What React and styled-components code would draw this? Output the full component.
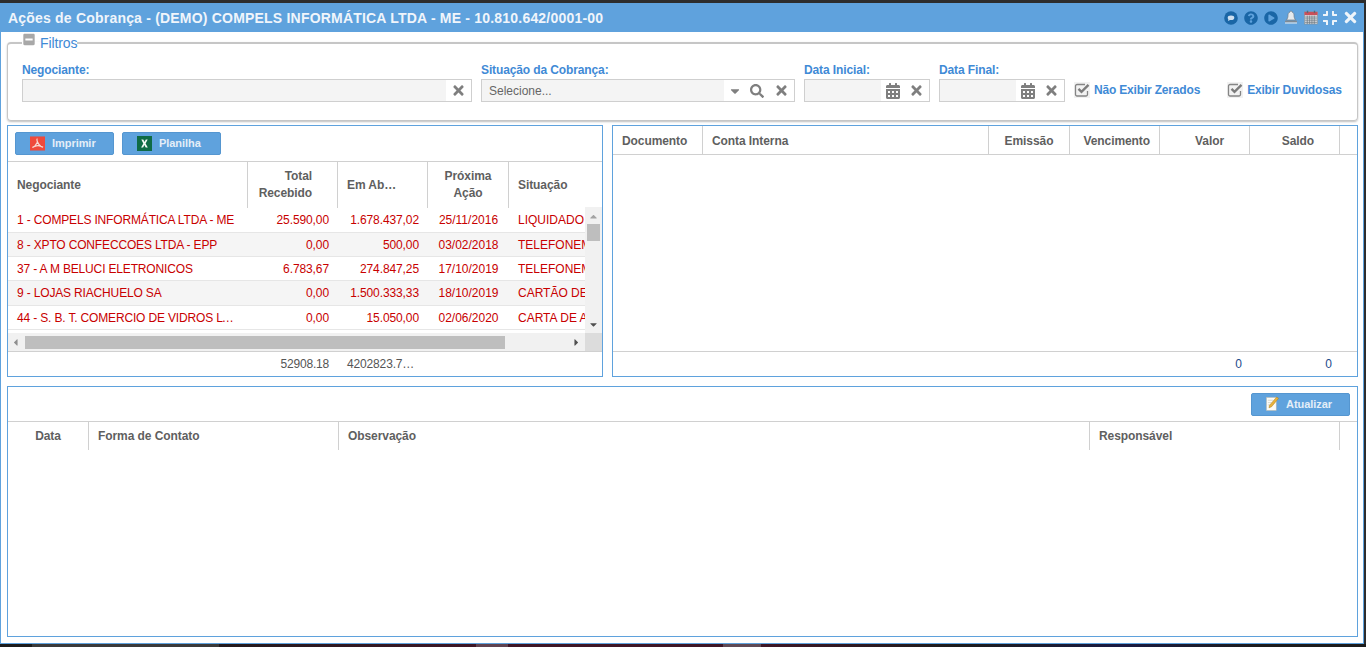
import React from 'react'
import styled, { createGlobalStyle } from 'styled-components'
import { FaTimes, FaSearch, FaCalendarAlt, FaCaretDown, FaCaretUp, FaCaretLeft, FaCaretRight, FaMinusSquare, FaQuestionCircle, FaPlayCircle, FaCompress } from 'react-icons/fa'

const GlobalStyle = createGlobalStyle`
  html, body { margin: 0; padding: 0; height: 100%; background: #222; }
  * { box-sizing: border-box; }
  body { font-family: "Liberation Sans", Arial, sans-serif; font-size: 12px; overflow: hidden; }
`

const BLUE = '#5fa2dd'

const Page = styled.div`
  width: 1366px;
  height: 647px;
  display: flex;
  flex-direction: column;
  background: #2d2d2d;
`
const Desk = styled.div`
  flex: 1;
  display: flex;
  padding-top: 3px;
  min-height: 0;
`
const Taskbar = styled.div`
  height: 3px;
  flex: none;
  background: linear-gradient(90deg,
    #1c1c1c 0 32px, #3a3a3a 32px 219px, #221a1d 219px, #3e1626 476px,
    #5f4350 476px 508px, #3e1626 508px 723px, #5f4a55 723px 761px,
    #3e1626 761px, #1c1c1c 960px, #1a1a42 1120px, #1c1c1c 1260px);
`
const Win = styled.div`
  width: 1364px;
  height: 641px;
  display: flex;
  flex-direction: column;
  background: #fff;
  border: 1px solid ${BLUE};
  border-top: 0;
`
const TitleBar = styled.div`
  height: 29px;
  flex: none;
  display: flex;
  align-items: center;
  justify-content: space-between;
  background: ${BLUE};
  padding: 0 4px 0 7px;
  color: #f0f5fb;
`
const Title = styled.div`
  font-size: 14px;
  font-weight: bold;
  letter-spacing: 0.2px;
  white-space: nowrap;
`
const Tools = styled.div`
  display: flex;
  align-items: center;
  gap: 6px;
  svg { display: block; flex: none; }
`
const CompressIcon = styled(FaCompress)`
  margin-left: -2px;
`
const CloseIcon = styled(FaTimes)`
  margin-left: -2px;
`
const Content = styled.div`
  flex: 1;
  display: flex;
  flex-direction: column;
  padding: 3px 5px 6px 6px;
  gap: 9px;
  min-height: 0;
`
const Fieldset = styled.fieldset`
  margin: 0 0 -5px;
  padding: 0 14px;
  height: 86px;
  flex: none;
  border: 1px solid #c6c6c6;
  border-top-width: 2px;
  border-radius: 4px;
  box-shadow: 0 1px 2px rgba(0, 0, 0, 0.25);
`
const Legend = styled.legend`
  display: flex;
  align-items: center;
  gap: 5px;
  padding: 0 0 0 1px;
  font-size: 14px;
  letter-spacing: -0.1px;
  color: #3f8ad6;
  line-height: 16px;
  svg { color: #a8a8a8; width: 12px; height: 13px; margin-top: -8px; }
`
const FilterRow = styled.div`
  display: flex;
  gap: 9px;
  margin-top: 12px;
  align-items: flex-end;
`
const Field = styled.div`
  width: ${p => p.$w}px;
  flex: none;
`
const Label = styled.div`
  color: #3f8ad6;
  font-weight: bold;
  font-size: 12px;
  letter-spacing: -0.12px;
  line-height: 14px;
  margin-bottom: 2px;
`
const InputBox = styled.div`
  height: 23px;
  display: flex;
  border: 1px solid #cfcfcf;
  background: #fff;
`
const InputText = styled.div`
  flex: 1;
  background: #f4f4f4;
  color: #666;
  font-size: 12px;
  line-height: 22px;
  padding-left: 7px;
`
const Trigger = styled.div`
  width: ${p => p.$w || 25}px;
  flex: none;
  display: flex;
  align-items: center;
  justify-content: center;
  color: #7f7f7f;
  svg { display: block; }
`
const Check = styled.label`
  display: flex;
  align-items: center;
  gap: 4px;
  color: #3f8ad6;
  font-weight: bold;
  font-size: 12px;
  letter-spacing: -0.18px;
  height: 23px;
  flex: none;
  margin-left: ${p => p.$ml || 0}px;
  margin-bottom: 1px;
  svg { display: block; }
`
const PanelRow = styled.div`
  display: flex;
  gap: 9px;
  height: 252px;
  flex: none;
`
const Panel = styled.div`
  border: 1px solid ${BLUE};
  display: flex;
  flex-direction: column;
  width: ${p => (p.$w ? p.$w + 'px' : 'auto')};
  flex: ${p => (p.$w ? 'none' : '1')};
  min-height: 0;
  min-width: 0;
`
const Toolbar = styled.div`
  height: ${p => p.$h}px;
  flex: none;
  display: flex;
  align-items: center;
  justify-content: ${p => (p.$end ? 'flex-end' : 'flex-start')};
  gap: 8px;
  padding: 0 7px;
  border-bottom: 1px solid #d0d0d0;
`
const Button = styled.div`
  width: 99px;
  height: 23px;
  display: flex;
  align-items: center;
  gap: 7px;
  padding: 0 0 1px 14px;
  background: ${BLUE};
  border: 1px solid #5596d0;
  border-radius: 2px;
  color: #e4eef8;
  font-size: 11px;
  font-weight: bold;
  letter-spacing: -0.05px;
  svg { display: block; flex: none; }
`
const HeadRow = styled.div`
  display: grid;
  grid-template-columns: ${p => p.$cols};
  height: ${p => p.$h}px;
  flex: none;
  border-bottom: ${p => (p.$line ? '1px solid #d0d0d0' : '0')};
`
const HeadCell = styled.div`
  display: flex;
  align-items: center;
  justify-content: ${p => p.$align || 'flex-start'};
  text-align: ${p => (p.$align === 'flex-end' ? 'right' : p.$align === 'center' ? 'center' : 'left')};
  padding: ${p => p.$pt || 0}px ${p => p.$pr || 9}px 0 9px;
  color: #5f5f5f;
  font-weight: bold;
  font-size: 12px;
  letter-spacing: -0.08px;
  line-height: 17px;
  border-right: ${p => (p.$last ? '0' : '1px solid #d0d0d0')};
  white-space: nowrap;
  overflow: hidden;
`
const GridBody = styled.div`
  flex: 1;
  display: flex;
  min-height: 0;
`
const Rows = styled.div`
  flex: 1;
  min-width: 0;
  overflow: hidden;
`
const Row = styled.div`
  display: grid;
  grid-template-columns: ${p => p.$cols};
  height: ${p => p.$h}px;
  background: ${p => (p.$odd ? '#f5f5f5' : '#fff')};
  border-bottom: 1px solid #e6e6e6;
`
const Cell = styled.div`
  padding: 1px 9px 0;
  line-height: 22px;
  color: #c80000;
  font-size: 12px;
  letter-spacing: ${p => p.$ls || 0}px;
  white-space: nowrap;
  overflow: hidden;
  text-align: ${p => p.$align || 'left'};
  text-overflow: ${p => (p.$ellipsis ? 'ellipsis' : 'clip')};
`
const VBar = styled.div`
  width: 17px;
  flex: none;
  margin-top: -1px;
  background: #f1f1f1;
  display: flex;
  flex-direction: column;
  align-items: center;
  color: #a3a3a3;
  padding-top: 4px;
  svg { display: block; flex: none; }
`
const VThumb = styled.div`
  width: 13px;
  height: 17px;
  margin-top: 2px;
  background: #bebebe;
`
const VDown = styled.div`
  margin-top: auto;
  margin-bottom: 3px;
  color: #505050;
`
const HBar = styled.div`
  height: 19px;
  flex: none;
  display: flex;
  background: #f1f1f1;
  border-bottom: 1px solid #d0d0d0;
`
const HTrack = styled.div`
  flex: 1;
  display: flex;
  align-items: flex-start;
  padding: 3px 0 0 2px;
  color: #8f8f8f;
  svg { display: block; flex: none; margin-top: 1px; }
`
const HThumb = styled.div`
  width: 480px;
  height: 13px;
  margin-left: 4px;
  background: #bebebe;
`
const HRight = styled.div`
  margin-left: auto;
  margin-right: 3px;
  color: #505050;
`
const Corner = styled.div`
  width: 17px;
  flex: none;
  background: #dcdcdc;
`
const FootRow = styled.div`
  display: grid;
  grid-template-columns: ${p => p.$cols};
  height: ${p => (p.$push ? 25 : 24)}px;
  flex: none;
  margin-top: ${p => (p.$push ? 'auto' : '0')};
  border-top: ${p => (p.$push ? '1px solid #d0d0d0' : '0')};
`
const FootCell = styled.div`
  padding: 0 ${p => p.$pr || 8}px 0 9px;
  line-height: 24px;
  font-size: 12px;
  letter-spacing: ${p => p.$ls || 0}px;
  color: ${p => p.$color || '#555'};
  text-align: ${p => p.$align || 'right'};
  white-space: nowrap;
  overflow: hidden;
`

const SpeechIcon = () => (
  <svg width="14" height="14" viewBox="0 0 14 14">
    <circle cx="7" cy="7" r="6.800" fill="#1a66a6" />
    <ellipse cx="7" cy="6.800" rx="3.300" ry="2.300" fill="#cfe0f0" />
    <path d="M4.500 8l-.5 2 2.500-1.300z" fill="#cfe0f0" />
  </svg>
)

const BellIcon = () => (
  <svg width="14" height="15" viewBox="0 0 14 15">
    <path d="M7 1c.6 0 1 .4 1 1 1.600.5 2 1.800 2 3.500 0 2 .6 3 1.500 4.500h-9C3.400 8.500 4 7.500 4 5.500 4 3.800 4.400 2.500 6 2c0-.6.400-1 1-1z" fill="#e6eaed" stroke="#6f7b86" strokeWidth="0.7" />
    <rect x="1" y="10.500" width="12" height="2" rx="0.5" fill="#7f8a94" />
    <rect x="1" y="12.500" width="12" height="1" fill="#e9edf1" />
  </svg>
)

const CalendarIcon = () => (
  <svg width="14" height="15" viewBox="0 0 15 15">
    <rect x="0.500" y="1.500" width="14" height="13" fill="#dfe3e6" stroke="#7e8890" strokeWidth="0.6" />
    <rect x="0.500" y="1.500" width="14" height="3.500" fill="#c9505a" />
    <rect x="3" y="0.200" width="1.500" height="2.500" fill="#5a6a76" />
    <rect x="10.500" y="0.200" width="1.500" height="2.500" fill="#5a6a76" />
    <path d="M1 7h13M1 9h13M1 11h13M1 13h13M3.500 5.500v9M6 5.500v9M8.500 5.500v9M11 5.500v9" stroke="#6e7a84" strokeWidth="0.8" />
  </svg>
)

const CheckIcon = () => (
  <svg width="16" height="16" viewBox="0 0 16 16">
    <rect width="16" height="16" fill="#f2f2f2" />
    <path d="M13.500 9v3.500a1.500 1.500 0 0 1-1.500 1.500H3a1.500 1.500 0 0 1-1.500-1.500V4A1.500 1.500 0 0 1 3 2.500h8" fill="none" stroke="#858585" strokeWidth="1.300" />
    <path d="M4.500 6.800l3 3L14.500 2.800" fill="none" stroke="#7c7c7c" strokeWidth="2.400" />
  </svg>
)

const PdfIcon = () => (
  <svg width="15" height="15" viewBox="0 0 16 15">
    <rect width="16" height="15" fill="#ef4a3c" />
    <path d="M8 2.500c-.8 0-.7 1.500 0 3.500L5 10.500c-1 .6-2 1-2.500 1.300M8 6c.8 1.800 2 3.300 3.500 4.500 1 .4 2 .7 2.500.8M5 10.500c2-.8 4.500-1.100 6.500 0" fill="none" stroke="#f7d9d3" strokeWidth="1.300" />
  </svg>
)

const ExcelIcon = () => (
  <svg width="15" height="15" viewBox="0 0 15 15">
    <rect width="15" height="15" fill="#0f6b45" />
    <path d="M4.300 3.500h2l1.200 2.400 1.300-2.400h1.900L8.600 7.400l2.200 4.100H8.700L7.400 9l-1.300 2.500H4.100l2.200-4.100z" fill="#f2f7f4" />
  </svg>
)

const NoteIcon = () => (
  <svg width="13" height="15" viewBox="0 0 14 16">
    <rect x="0.500" y="1.500" width="10.500" height="14" fill="#fbfbf6" stroke="#b9b9b0" strokeWidth="0.6" />
    <path d="M2 4.500h6M2 7h4M2 9.500h3" stroke="#c8c8c0" strokeWidth="0.7" />
    <path d="M11.500 1l2 1.500-7.500 9-2.800 1.200.6-2.800z" fill="#e8b23a" stroke="#a67818" strokeWidth="0.5" />
  </svg>
)

const leftCols = '240px 90px 90px 81px 1fr'
const rightCols = '90px 286px 81px 90px 90px 90px 1fr'
const bottomCols = '81px 250px 751px 250px 1fr'
const rowHeights = [25, 24, 24, 25, 24]

const negociantes = [
  ['1 - COMPELS INFORMÁTICA LTDA - ME', '25.590,00', '1.678.437,02', '25/11/2016', 'LIQUIDADO'],
  ['8 - XPTO CONFECCOES LTDA - EPP', '0,00', '500,00', '03/02/2018', 'TELEFONEMA'],
  ['37 - A M BELUCI ELETRONICOS', '6.783,67', '274.847,25', '17/10/2019', 'TELEFONEMA'],
  ['9 - LOJAS RIACHUELO SA', '0,00', '1.500.333,33', '18/10/2019', 'CARTÃO DE CRÉDITO'],
  ['44 - S. B. T. COMERCIO DE VIDROS LTDA', '0,00', '15.050,00', '02/06/2020', 'CARTA DE AVISO'],
]

export default function App() {
  return (
    <Page>
      <GlobalStyle />
      <Desk>
        <Win>
          <TitleBar>
            <Title>Ações de Cobrança - (DEMO) COMPELS INFORMÁTICA LTDA - ME - 10.810.642/0001-00</Title>
            <Tools>
              <SpeechIcon />
              <FaQuestionCircle size={14} color="#1a66a6" />
              <FaPlayCircle size={14} color="#1a66a6" />
              <BellIcon />
              <CalendarIcon />
              <CompressIcon size={16} color="#eef4fa" />
              <CloseIcon size={17} color="#eef4fa" />
            </Tools>
          </TitleBar>
          <Content>
            <Fieldset>
              <Legend><FaMinusSquare />Filtros</Legend>
              <FilterRow>
                <Field $w={450}>
                  <Label>Negociante:</Label>
                  <InputBox>
                    <InputText />
                    <Trigger><FaTimes size={15} /></Trigger>
                  </InputBox>
                </Field>
                <Field $w={314}>
                  <Label>Situação da Cobrança:</Label>
                  <InputBox>
                    <InputText>Selecione...</InputText>
                    <Trigger $w={21}><FaCaretDown size={14} /></Trigger>
                    <Trigger $w={24}><FaSearch size={14} /></Trigger>
                    <Trigger><FaTimes size={15} /></Trigger>
                  </InputBox>
                </Field>
                <Field $w={126}>
                  <Label>Data Inicial:</Label>
                  <InputBox>
                    <InputText />
                    <Trigger $w={23}><FaCalendarAlt size={16} /></Trigger>
                    <Trigger><FaTimes size={15} /></Trigger>
                  </InputBox>
                </Field>
                <Field $w={126}>
                  <Label>Data Final:</Label>
                  <InputBox>
                    <InputText />
                    <Trigger $w={23}><FaCalendarAlt size={16} /></Trigger>
                    <Trigger><FaTimes size={15} /></Trigger>
                  </InputBox>
                </Field>
                <Check><CheckIcon />Não Exibir Zerados</Check>
                <Check $ml={18}><CheckIcon />Exibir Duvidosas</Check>
              </FilterRow>
            </Fieldset>
            <PanelRow>
              <Panel $w={596}>
                <Toolbar $h={36}>
                  <Button><PdfIcon />Imprimir</Button>
                  <Button><ExcelIcon />Planilha</Button>
                </Toolbar>
                <HeadRow $cols={leftCols} $h={46}>
                  <HeadCell>Negociante</HeadCell>
                  <HeadCell $align="flex-end" $pr={25}>Total<br />Recebido</HeadCell>
                  <HeadCell>Em Ab…</HeadCell>
                  <HeadCell $align="center">Próxima<br />Ação</HeadCell>
                  <HeadCell $last>Situação</HeadCell>
                </HeadRow>
                <GridBody>
                  <Rows>
                    {negociantes.map((n, i) => (
                      <Row key={n[0]} $cols={leftCols} $odd={i % 2 === 1} $h={rowHeights[i]}>
                        <Cell $ellipsis $ls={-0.16}>{n[0]}</Cell>
                        <Cell $align="right" $ls={-0.1}>{n[1]}</Cell>
                        <Cell $align="right" $ls={-0.1}>{n[2]}</Cell>
                        <Cell $align="center">{n[3]}</Cell>
                        <Cell>{n[4]}</Cell>
                      </Row>
                    ))}
                  </Rows>
                  <VBar>
                    <FaCaretUp size={11} />
                    <VThumb />
                    <VDown><FaCaretDown size={11} /></VDown>
                  </VBar>
                </GridBody>
                <HBar>
                  <HTrack>
                    <FaCaretLeft size={11} />
                    <HThumb />
                    <HRight><FaCaretRight size={11} /></HRight>
                  </HTrack>
                  <Corner />
                </HBar>
                <FootRow $cols={leftCols}>
                  <FootCell />
                  <FootCell $pr={9} $ls={-0.2}>52908.18</FootCell>
                  <FootCell $align="left" $ls={-0.15}>4202823.7…</FootCell>
                </FootRow>
              </Panel>
              <Panel>
                <HeadRow $cols={rightCols} $h={29} $line>
                  <HeadCell $pt={2}>Documento</HeadCell>
                  <HeadCell $pt={2}>Conta Interna</HeadCell>
                  <HeadCell $pt={2} $align="center">Emissão</HeadCell>
                  <HeadCell $pt={2} $align="flex-end">Vencimento</HeadCell>
                  <HeadCell $pt={2} $align="flex-end" $pr={25}>Valor</HeadCell>
                  <HeadCell $pt={2} $align="flex-end" $pr={25}>Saldo</HeadCell>
                  <HeadCell $last />
                </HeadRow>
                <FootRow $cols={rightCols} $push>
                  <FootCell />
                  <FootCell />
                  <FootCell />
                  <FootCell />
                  <FootCell $color="#1c4a8a">0</FootCell>
                  <FootCell $color="#1c4a8a">0</FootCell>
                </FootRow>
              </Panel>
            </PanelRow>
            <Panel>
              <Toolbar $h={35} $end>
                <Button><NoteIcon />Atualizar</Button>
              </Toolbar>
              <HeadRow $cols={bottomCols} $h={28}>
                <HeadCell $align="center">Data</HeadCell>
                <HeadCell>Forma de Contato</HeadCell>
                <HeadCell>Observação</HeadCell>
                <HeadCell>Responsável</HeadCell>
                <HeadCell $last />
              </HeadRow>
            </Panel>
          </Content>
        </Win>
      </Desk>
      <Taskbar />
    </Page>
  )
}
